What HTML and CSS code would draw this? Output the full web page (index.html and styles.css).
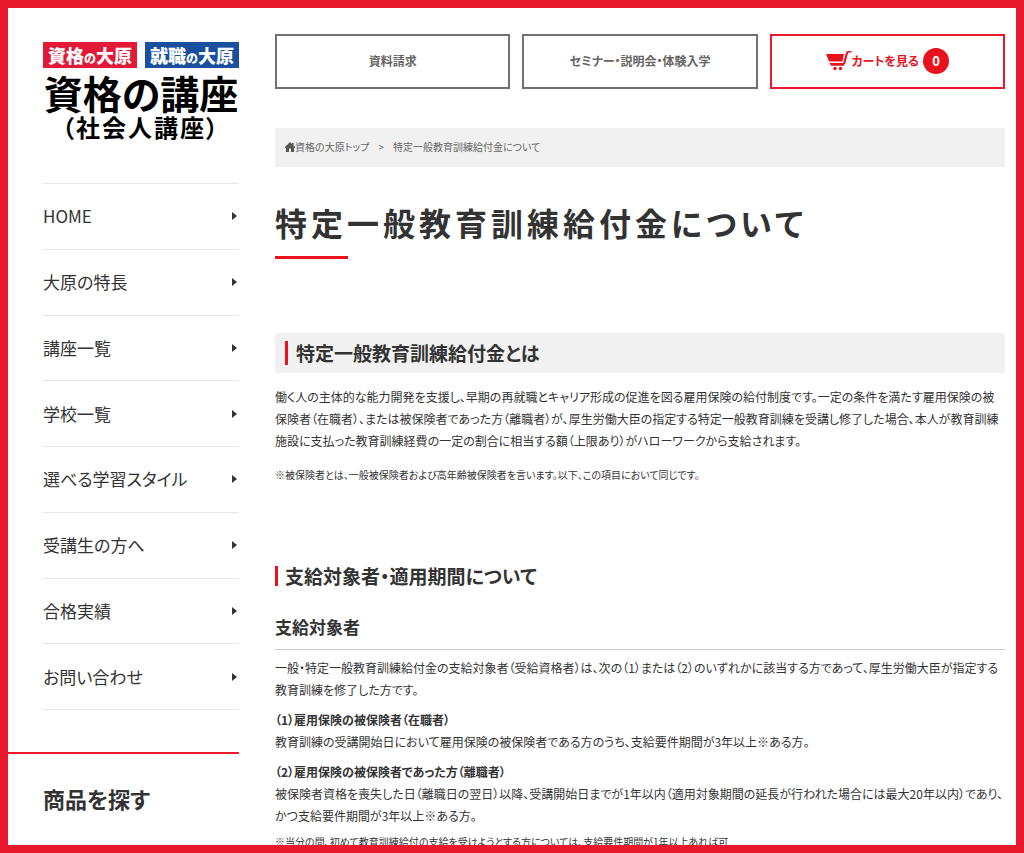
FILE: index.html
```html
<!DOCTYPE html>
<html lang="ja">
<head>
    <meta charset="UTF-8">
    <meta name="viewport" content="width=device-width, initial-scale=1.0">
    <title>特定一般教育訓練給付金について</title>
    <link rel="stylesheet" href="styles.css">
</head>
<body>
    <div class="layout">
        <aside class="sidebar">
            <a class="logo" href="#">
                <span class="logo-badges">
                    <span class="badge badge-red">資格<small>の</small>大原</span>
                    <span class="badge badge-blue">就職<small>の</small>大原</span>
                </span>
                <span class="logo-name">資格の講座</span>
                <span class="logo-sub">（社会人講座）</span>
            </a>

            <nav class="side-nav">
                <a href="#">HOME</a>
                <a href="#">大原の特長</a>
                <a href="#">講座一覧</a>
                <a href="#">学校一覧</a>
                <a href="#">選べる学習スタイル</a>
                <a href="#">受講生の方へ</a>
                <a href="#">合格実績</a>
                <a href="#">お問い合わせ</a>
            </nav>

            <div class="search">
                <h2 class="search-title">商品を探す</h2>
            </div>
        </aside>

        <main class="content">
            <div class="header-links">
                <a class="header-btn" href="#">資料請求</a>
                <a class="header-btn" href="#">セミナー・説明会・体験入学</a>
                <a class="header-btn header-cart" href="#">
                    <svg class="cart-icon" viewBox="0 0 26 20" aria-hidden="true">
                        <path d="M0 3h18l-1.500 7.500H3zM3.500 12H17.200l2.800-10.400Q20.400 0 22 0h3.500v1.600h-2.700q-.7 0-.9.800L19 13.500H3.900zM4.500 13.500H18v1.300H5z"/>
                        <circle cx="9" cy="17.500" r="1.700"/>
                        <circle cx="14.500" cy="17.500" r="1.700"/>
                    </svg>
                    <span>カートを見る</span>
                    <span class="cart-count">0</span>
                </a>
            </div>

            <div class="breadcrumb">
                <a href="#">
                    <svg class="home-icon" viewBox="0 0 10 10" aria-hidden="true">
                        <path d="M5 0l2 2V1h1.500v2.500L10 5v1H9v4H6V6.500H4V10H1V6H0V5z"/>
                    </svg>資格の大原トップ</a>
                <span>&gt;</span>
                <span>特定一般教育訓練給付金について</span>
            </div>

            <h1 class="page-title">特定一般教育訓練給付金について</h1>

            <section class="about">
                <h2 class="heading-box">特定一般教育訓練給付金とは</h2>
                <p>働く人の主体的な能力開発を支援し、早期の再就職とキャリア形成の促進を図る雇用保険の給付制度です。一定の条件を満たす雇用保険の被保険者（在職者）、または被保険者であった方（離職者）が、厚生労働大臣の指定する特定一般教育訓練を受講し修了した場合、本人が教育訓練施設に支払った教育訓練経費の一定の割合に相当する額（上限あり）がハローワークから支給されます。</p>
                <p class="note">※被保険者とは、一般被保険者および高年齢被保険者を言います。以下、この項目において同じです。</p>
            </section>

            <section class="target">
                <h3 class="heading-bar">支給対象者・適用期間について</h3>
                <h4 class="heading-line">支給対象者</h4>
                <p>一般・特定一般教育訓練給付金の支給対象者（受給資格者）は、次の（1）または（2）のいずれかに該当する方であって、厚生労働大臣が指定する教育訓練を修了した方です。</p>
                <dl>
                    <dt>（1）雇用保険の被保険者（在職者）</dt>
                    <dd>教育訓練の受講開始日において雇用保険の被保険者である方のうち、支給要件期間が3年以上※ある方。</dd>
                    <dt>（2）雇用保険の被保険者であった方（離職者）</dt>
                    <dd>被保険者資格を喪失した日（離職日の翌日）以降、受講開始日までが1年以内（適用対象期間の延長が行われた場合には最大20年以内）であり、かつ支給要件期間が3年以上※ある方。</dd>
                </dl>
                <p class="note">※当分の間、初めて教育訓練給付の支給を受けようとする方については、支給要件期間が1年以上あれば可</p>
            </section>
        </main>
    </div>
</body>
</html>
```
FILE: styles.css
```css
* {
    margin: 0;
    padding: 0;
    box-sizing: border-box;
}

body {
    height: 100vh;
    overflow: hidden;
    border: 8px solid #e8192c;
    background: #fff;
    color: #333;
    font-family: "Noto Sans CJK JP", sans-serif;
    font-feature-settings: "palt";
    font-size: 12px;
    line-height: 22px;
}

a {
    color: inherit;
    text-decoration: none;
}

.layout {
    display: flex;
    gap: 36px;
    padding-right: 11px;
}

/* sidebar */
.sidebar {
    flex: 0 0 231px;
    min-width: 0;
    padding-top: 34px;
}

.logo {
    display: block;
    height: 141px;
    margin-left: 35px;
    color: #000;
    font-weight: 700;
}

.logo-badges {
    display: flex;
    gap: 8px;
}

.badge {
    flex: 1;
    height: 26px;
    line-height: 26px;
    font-size: 18px;
    font-weight: 900;
    text-align: center;
    color: #fff;
}

.badge small {
    font-size: 12px;
}

.badge-red {
    background: #e21a37;
}

.badge-blue {
    background: #1a4f9f;
}

.logo-name,
.logo-sub {
    display: block;
    text-align: center;
    white-space: nowrap;
}

.logo-name {
    font-size: 39px;
    line-height: 48px;
}

.logo-sub {
    font-size: 24px;
    line-height: 22px;
    letter-spacing: 2px;
}

.side-nav {
    display: grid;
    grid-auto-rows: 1fr;
    height: 527px;
    margin-left: 35px;
    border-top: 1px solid #e6e6e6;
    font-size: 17px;
}

.side-nav a {
    display: flex;
    align-items: center;
    justify-content: space-between;
    padding-right: 2px;
    border-bottom: 1px solid #e6e6e6;
}

.side-nav a::after {
    content: "";
    border: 4px solid transparent;
    border-left: 5px solid #333;
    border-right: 0;
}

.search {
    margin-top: 42px;
    padding: 26px 0 0 35px;
    border-top: 2px solid #e8192c;
}

.search-title {
    font-size: 22px;
    line-height: 36px;
}

/* main column */
.content {
    flex: 1;
    min-width: 0;
    padding-top: 26px;
}

.header-links {
    display: grid;
    grid-template-columns: repeat(3, 1fr);
    gap: 12px;
}

.header-btn {
    display: flex;
    align-items: center;
    justify-content: center;
    height: 55px;
    padding-bottom: 2px;
    border: 2px solid #717171;
    color: #666;
    font-weight: 700;
}

.header-cart {
    border-color: #e8192c;
    color: #e8121d;
}

.cart-icon {
    width: 26px;
    height: 20px;
    fill: currentColor;
}

.cart-count {
    width: 26px;
    height: 26px;
    margin-left: 4px;
    border-radius: 50%;
    background: #e8121d;
    color: #fff;
    font-size: 13px;
    line-height: 25px;
    text-align: center;
}

.breadcrumb {
    display: flex;
    gap: 9px;
    margin-top: 39px;
    padding: 8px 10px 9px;
    background: #f1f1f1;
    color: #666;
    font-size: 10px;
}

.home-icon {
    width: 10px;
    height: 10px;
    fill: #555;
    vertical-align: -1px;
}

.page-title {
    margin-top: 31px;
    font-size: 32px;
    line-height: 48px;
    letter-spacing: 4px;
}

.page-title::after {
    content: "";
    display: block;
    width: 73px;
    height: 3px;
    margin-top: 10px;
    background: #e8121d;
}

.about {
    margin-top: 74px;
}

.heading-box {
    display: flex;
    align-items: center;
    gap: 8px;
    height: 40px;
    margin-bottom: 13px;
    padding: 0 10px;
    background: #f1f1f1;
    font-size: 19px;
}

.heading-box::before {
    content: "";
    width: 3px;
    height: 24px;
    background: #e8121d;
}

.note {
    margin-top: 12px;
    font-size: 10px;
}

.target {
    margin-top: 80px;
}

.heading-bar {
    padding-left: 7px;
    border-left: 3px solid #e8121d;
    font-size: 19px;
    line-height: 20px;
}

.heading-line {
    margin-top: 24px;
    padding-bottom: 5px;
    border-bottom: 1px solid #ccc;
    font-size: 17px;
    line-height: 34px;
}

.target > p:not(.note) {
    margin-top: 7px;
}

dt {
    margin-top: 8px;
    font-weight: 700;
}

.target .note {
    margin-top: 4px;
}
```
